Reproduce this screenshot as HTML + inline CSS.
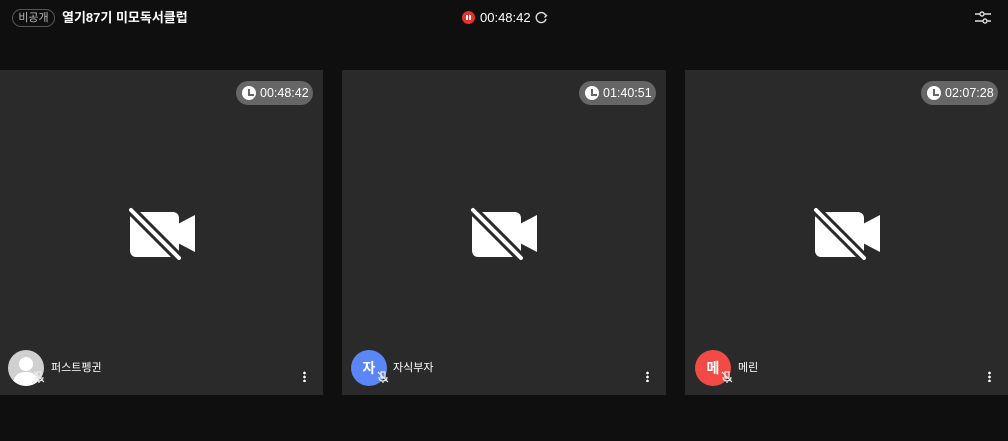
<!DOCTYPE html>
<html><head><meta charset="utf-8"><style>
*{margin:0;padding:0;box-sizing:border-box}
body{width:1008px;height:441px;background:#0f0f0f;font-family:"Liberation Sans","Noto Sans CJK KR",sans-serif;color:#fff;position:relative;overflow:hidden}
.badge{position:absolute;left:12px;top:9px;height:18px;width:43px;border:1px solid #555;border-radius:9px;font-size:11px;color:#bbb;text-align:center;line-height:16px}
.title{position:absolute;left:62px;top:9px;font-size:13px;font-weight:bold;line-height:17px}
.rec{position:absolute;left:462px;top:11px;width:13px;height:13px;border-radius:50%;background:#e8312b}
.rec:before,.rec:after{content:"";position:absolute;top:4px;width:2px;height:5px;background:#fff}
.rec:before{left:4px}.rec:after{left:7px}
.time{position:absolute;left:480px;top:9px;font-size:13px;line-height:17px}
.tile{position:absolute;top:70px;height:325px;background:#2a2a2a;width:324px}
.pill{position:absolute;top:11px;right:10px;width:77px;height:24px;border-radius:12px;background:#666;font-size:12.5px;line-height:24px;padding:0 0 0 24px}
.pill i{position:absolute;left:6px;top:5px;width:14px;height:14px;border-radius:50%;background:#fff}
.pill i:after{content:"";position:absolute;left:6px;top:3px;width:4px;height:5px;border-left:2px solid #666;border-bottom:2px solid #666}
.av{position:absolute;left:8px;top:280px;width:36px;height:36px;border-radius:50%;font-size:14px;font-weight:bold;text-align:center;line-height:36px}
.nm{position:absolute;left:51px;top:291px;font-size:11px;line-height:14px}
.dots{position:absolute;right:17px;top:301px;width:3px;height:11px;background:radial-gradient(circle,#fff 1.2px,transparent 1.5px) 0 0/3px 4px}
.mic{position:absolute;left:33px;top:301px}
</style></head><body>
<div class="badge">비공개</div>
<div class="title">열기87기 미모독서클럽</div>
<div class="rec"></div>
<div class="time">00:48:42</div>
<svg style="position:absolute;left:535px;top:11px" width="13" height="13" viewBox="0 0 13 13"><path d="M10.5 4A5 5 0 1 0 11 8" fill="none" stroke="#ddd" stroke-width="1.4"/><path d="M9 2.5L11.5 4.5 9.5 6.5" fill="none" stroke="#ddd" stroke-width="1.4"/></svg>
<svg style="position:absolute;left:973px;top:10px" width="20" height="16" viewBox="0 0 20 16"><path d="M2 4H7M11 4H18M2 11H10M14 11H18" stroke="#ddd" stroke-width="1.4"/><circle cx="9" cy="4" r="2" fill="none" stroke="#ddd" stroke-width="1.4"/><circle cx="12" cy="11" r="2" fill="none" stroke="#ddd" stroke-width="1.4"/></svg>

<div class="tile" style="left:0;width:323px">
<div class="pill"><i></i>00:48:42</div>
<svg style="position:absolute;left:0;top:0" width="323" height="325"><g transform="translate(0,-70)"><rect x="130" y="212" width="49" height="45" rx="6" fill="#fff"/><polygon points="176,225 195,215 195,252 176,242" fill="#fff"/><line x1="131" y1="210" x2="179" y2="258" stroke="#2a2a2a" stroke-width="10"/><line x1="131" y1="210" x2="179" y2="258" stroke="#fff" stroke-width="4" stroke-linecap="round"/></g></svg>
<div class="av" style="background:#d0d0d0;overflow:hidden"><svg width="36" height="36"><circle cx="18" cy="14" r="7" fill="#fff"/><path d="M5 36C5 25 11 22 18 22S31 25 31 36Z" fill="#fff"/></svg></div>
<svg class="mic" width="12" height="12"><path d="M4 1h4v6H4zM2 6q0 4 4 4t4-4M6 10v2M1 1l10 10" fill="none" stroke="#eee" stroke-width="1.2"/></svg>
<div class="nm">퍼스트펭귄</div><div class="dots"></div>
</div>
<div class="tile" style="left:342px">
<div class="pill"><i></i>01:40:51</div>
<svg style="position:absolute;left:0;top:0" width="324" height="325"><g transform="translate(0,-70)"><rect x="130" y="212" width="49" height="45" rx="6" fill="#fff"/><polygon points="176,225 195,215 195,252 176,242" fill="#fff"/><line x1="131" y1="210" x2="179" y2="258" stroke="#2a2a2a" stroke-width="10"/><line x1="131" y1="210" x2="179" y2="258" stroke="#fff" stroke-width="4" stroke-linecap="round"/></g></svg>
<div class="av" style="background:#5b86f5;left:9px">자</div>
<svg class="mic" style="left:35px" width="12" height="12"><path d="M4 1h4v6H4zM2 6q0 4 4 4t4-4M6 10v2M1 1l10 10" fill="none" stroke="#eee" stroke-width="1.2"/></svg>
<div class="nm">자식부자</div><div class="dots"></div>
</div>
<div class="tile" style="left:685px;width:323px">
<div class="pill"><i></i>02:07:28</div>
<svg style="position:absolute;left:0;top:0" width="323" height="325"><g transform="translate(0,-70)"><rect x="130" y="212" width="49" height="45" rx="6" fill="#fff"/><polygon points="176,225 195,215 195,252 176,242" fill="#fff"/><line x1="131" y1="210" x2="179" y2="258" stroke="#2a2a2a" stroke-width="10"/><line x1="131" y1="210" x2="179" y2="258" stroke="#fff" stroke-width="4" stroke-linecap="round"/></g></svg>
<div class="av" style="background:#f24b45;left:10px">메</div>
<svg class="mic" style="left:36px" width="12" height="12"><path d="M4 1h4v6H4zM2 6q0 4 4 4t4-4M6 10v2M1 1l10 10" fill="none" stroke="#eee" stroke-width="1.2"/></svg>
<div class="nm" style="left:53px">메린</div><div class="dots"></div>
</div>
</body></html>
